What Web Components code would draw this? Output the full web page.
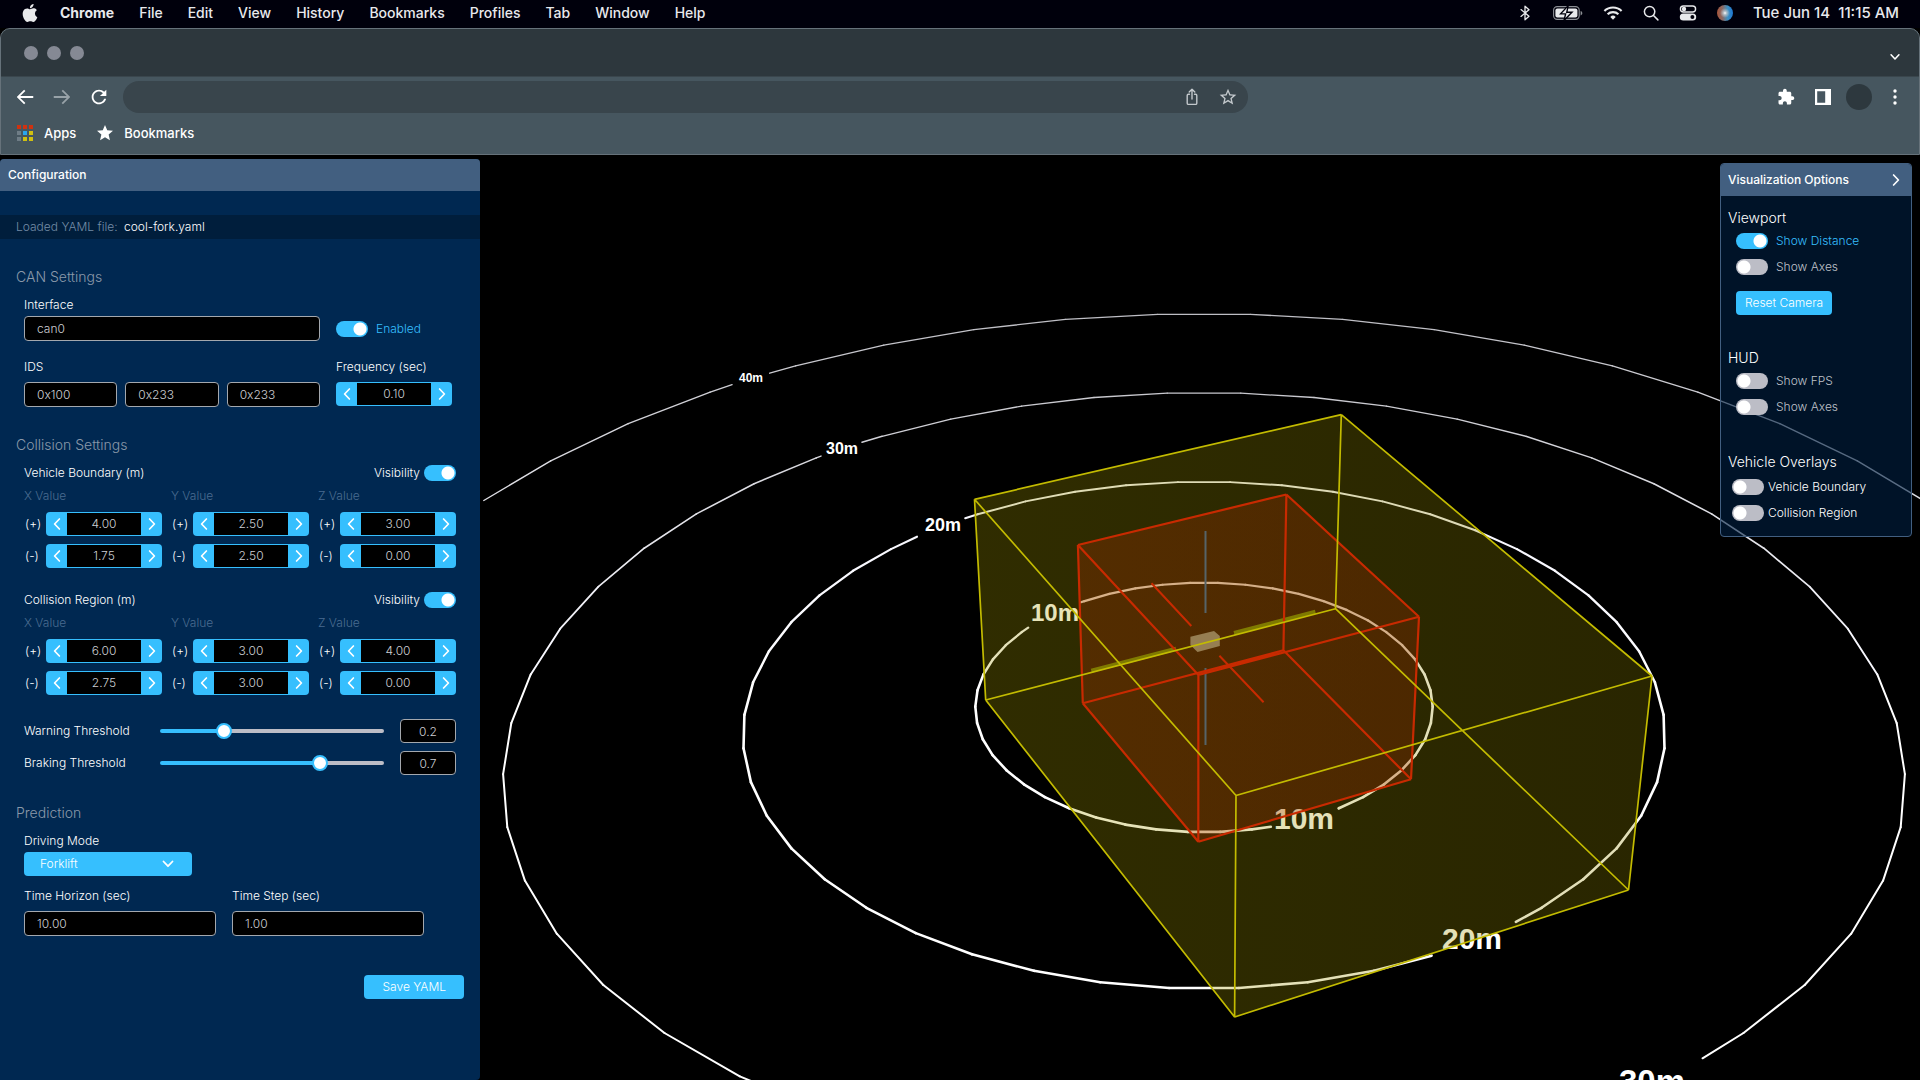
<!DOCTYPE html>
<html lang="en">
<head>
<meta charset="utf-8">
<title>Fork collision configurator</title>
<style>
html, body { height: 100%; margin: 0; background: #000; }
body { font-family: Inter, "Liberation Sans", sans-serif; font-size: 12px; line-height: 16px; color: #fff; }
</style>
</head>
<body>
<desktop-shell></desktop-shell>
<script>
const define = (name, css, html, setup) => {
  const tpl = document.createElement('template');
  tpl.innerHTML = `<style>*{box-sizing:border-box}${css}</style>${html}`;
  customElements.define(name, class extends HTMLElement {
    connectedCallback() {
      if (this.shadowRoot) return;
      const root = this.attachShadow({ mode: 'open' });
      root.append(tpl.content.cloneNode(true));
      if (setup) setup(this, root);
    }
  });
};

/* ---------- icons ---------- */
const stroke = 'fill="none" stroke="currentColor" stroke-linecap="round" stroke-linejoin="round"';
const ICONS = {
  apple: ['0 0 24 24', '<path fill="currentColor" d="M12.152 6.896c-.948 0-2.415-1.078-3.96-1.04-2.04.027-3.91 1.183-4.961 3.014-2.117 3.675-.546 9.103 1.519 12.09 1.013 1.454 2.208 3.09 3.792 3.039 1.52-.065 2.09-.987 3.935-.987 1.831 0 2.35.987 3.96.948 1.637-.026 2.676-1.48 3.676-2.948 1.156-1.688 1.636-3.325 1.662-3.415-.039-.013-3.182-1.221-3.22-4.857-.026-3.04 2.48-4.494 2.597-4.559-1.429-2.09-3.623-2.324-4.39-2.376-2-.156-3.675 1.09-4.61 1.09zM15.53 3.83c.843-1.012 1.4-2.427 1.245-3.83-1.207.052-2.662.805-3.532 1.818-.78.896-1.454 2.338-1.273 3.714 1.338.104 2.715-.688 3.559-1.701"/>'],
  bluetooth: ['0 0 16 16', `<path ${stroke} stroke-width="1.3" d="M4 4.6l8 6.6L8 14.8V1.2l4 3.6-8 6.6"/>`],
  battery: ['0 0 30 16', '<rect x=".6" y="1.6" width="25.6" height="12.8" rx="3.6" fill="none" stroke="#8d9096" stroke-width="1.1"/><rect x="2.4" y="3.4" width="22" height="9.2" rx="2" fill="currentColor"/><path d="M27.6 6v4.4c1-.3 1.7-1.2 1.7-2.2s-.7-1.9-1.7-2.2z" fill="#8d9096"/><path d="M15.2.6L7.6 8.9h5l-1.6 6.6L19 7.2h-5.2z" fill="currentColor" stroke="#00000c" stroke-width="1.4"/>'],
  wifi: ['0 0 20 16', '<g fill="none" stroke="currentColor" stroke-width="2.1"><path d="M1.4 6a12.4 12.4 0 0 1 17.2 0"/><path d="M4.6 9.3a7.8 7.8 0 0 1 10.8 0"/></g><path d="M10 14.8l-2.7-2.9a3.9 3.9 0 0 1 5.4 0z" fill="currentColor"/>'],
  search: ['0 0 16 16', `<g ${stroke} stroke-width="1.5"><circle cx="6.6" cy="6.6" r="5.2"/><path d="M10.5 10.5l4.4 4.4"/></g>`],
  control: ['0 0 18 16', '<rect x="1.4" y="1" width="15.2" height="6" rx="3" fill="none" stroke="currentColor" stroke-width="1.4"/><circle cx="5" cy="4" r="2.2" fill="currentColor"/><rect x=".8" y="8.6" width="16.4" height="7" rx="3.5" fill="currentColor"/><circle cx="13.4" cy="12.1" r="2" fill="#00000c"/>'],
  siri: ['0 0 16 16', '<defs><radialGradient id="g"><stop offset="0" stop-color="#fff"/><stop offset=".35" stop-color="#c4ccd2" stop-opacity=".8"/><stop offset="1" stop-color="#b9c4cc" stop-opacity="0"/></radialGradient><linearGradient id="h"><stop offset="0" stop-color="#a8553a"/><stop offset=".35" stop-color="#8a6a66"/><stop offset=".65" stop-color="#3f8fc0"/><stop offset="1" stop-color="#1d78d4"/></linearGradient></defs><circle cx="8" cy="8" r="8" fill="url(#h)"/><circle cx="8" cy="8" r="5" fill="url(#g)"/>'],
  down: ['0 0 16 16', `<path ${stroke} stroke-width="1.8" d="M3.5 5.5L8 10.2l4.5-4.7"/>`],
  left: ['0 0 16 16', `<path ${stroke} stroke-width="1.7" d="M10.4 3L5.6 8l4.8 5"/>`],
  right: ['0 0 16 16', `<path ${stroke} stroke-width="1.7" d="M5.6 3l4.8 5-4.8 5"/>`],
  back: ['0 0 24 24', '<path fill="currentColor" d="M21 11H6.83l5.59-5.59L11 4l-8 8 8 8 1.41-1.41L6.83 13H21z"/>'],
  forward: ['0 0 24 24', '<path fill="currentColor" d="M3 11h14.17l-5.59-5.59L13 4l8 8-8 8-1.41-1.41L17.17 13H3z"/>'],
  reload: ['0 0 24 24', '<path fill="currentColor" d="M17.65 6.35C16.2 4.9 14.21 4 12 4c-4.42 0-7.99 3.58-7.99 8s3.57 8 7.99 8c3.73 0 6.84-2.55 7.73-6h-2.08c-.82 2.33-3.04 4-5.65 4-3.31 0-6-2.69-6-6s2.69-6 6-6c1.66 0 3.14.69 4.22 1.78L13 11h7V4l-2.35 2.35z"/>'],
  share: ['0 0 16 18', `<path ${stroke} stroke-width="1.4" d="M5.5 6.2H4.4q-1.2 0-1.2 1.2v7.8q0 1.2 1.2 1.2h7.2q1.2 0 1.2-1.2V7.4q0-1.2-1.2-1.2h-1.1M8 11V1.4M5.2 4L8 1.2 10.8 4"/>`],
  starline: ['0 0 24 24', '<path fill="currentColor" d="M22 9.24l-7.19-.62L12 2 9.19 8.63 2 9.24l5.46 4.73L5.82 21 12 17.27 18.18 21l-1.63-7.03L22 9.24zM12 15.4l-3.76 2.27 1-4.28-3.32-2.88 4.38-.38L12 6.1l1.71 4.04 4.38.38-3.32 2.88 1 4.28L12 15.4z"/>'],
  star: ['2 2 20 20', '<path fill="currentColor" d="M12 17.27L18.18 21l-1.64-7.03L22 9.24l-7.19-.61L12 2 9.19 8.63 2 9.24l5.46 4.73L5.82 21z"/>'],
  puzzle: ['0 0 24 24', '<path fill="currentColor" d="M20.5 11H19V7c0-1.1-.9-2-2-2h-4V3.5C13 2.12 11.88 1 10.5 1S8 2.12 8 3.5V5H4c-1.1 0-1.99.9-1.99 2v3.8H3.5c1.49 0 2.7 1.21 2.7 2.7s-1.21 2.7-2.7 2.7H2V20c0 1.1.9 2 2 2h3.8v-1.5c0-1.49 1.21-2.7 2.7-2.7 1.49 0 2.7 1.21 2.7 2.7V22H17c1.1 0 2-.9 2-2v-4h1.5c1.38 0 2.5-1.12 2.5-2.5S21.88 11 20.5 11z"/>'],
  sidebar: ['0 0 16 16', '<path fill="currentColor" fill-rule="evenodd" d="M0 0h16v16H0zM2.2 2.2v11.6h8V2.2z"/>'],
  more: ['0 0 16 16', '<g fill="currentColor"><circle cx="8" cy="2" r="1.7"/><circle cx="8" cy="8" r="1.7"/><circle cx="8" cy="14" r="1.7"/></g>'],
  apps: ['0 0 16 16', '<g><path fill="#cf3210" d="M0 0h4v4H0zM6 0h4v4H6zM12 0h4v4h-4z"/><path fill="#6f7d86" d="M0 6h4v4H0zM0 12h4v4H0z"/><path fill="#2aa5ee" d="M6 6h4v4H6z"/><path fill="#d0c010" d="M12 6h4v4h-4zM6 12h4v4H6zM12 12h4v4h-4z"/></g>']
};
define('ui-icon', `:host{display:inline-flex;flex:none;width:16px;height:16px}svg{width:100%;height:100%;display:block}`, ``, (el, root) => {
  const [box, body] = ICONS[el.getAttribute('name')];
  root.innerHTML += `<svg viewBox="${box}" aria-hidden="true">${body}</svg>`;
});

/* ---------- controls ---------- */
define('text-field', `
:host{display:flex;flex-direction:column;gap:7px;min-width:0;flex:1}
:host([tight]){gap:3px}
:host([boxed]){flex:none;width:56px}
label:empty{display:none}
input{width:100%;height:25px;padding:0 12px;background:#000;border:1px solid #a4a8ae;border-radius:4px;color:#ccced3;font:inherit}
:host([boxed]) input{height:24px;padding:0;text-align:center}`,
`<label for="i"></label><input id="i" type="text">`, (el, root) => {
  const input = root.querySelector('input');
  root.querySelector('label').textContent = el.getAttribute('label') || '';
  if (el.hasAttribute('name')) input.setAttribute('aria-label', el.getAttribute('name'));
  input.value = el.getAttribute('value');
});

define('num-stepper', `
:host{display:flex;flex-direction:column;gap:7px}
label:empty{display:none}
div{display:flex;width:116px;height:24px;background:#36bffe;border-radius:4px;padding:1px 0}
button{flex:none;width:21px;padding:0;border:0;background:none;color:#fff;display:flex;align-items:center;justify-content:center}
ui-icon{width:16px;height:16px}
input{flex:1;min-width:0;padding:0;border:0;background:#000;color:#ccced3;font:inherit;text-align:center}`,
`<label for="i"></label><div><button type="button" aria-label="Decrease"><ui-icon name="left"></ui-icon></button><input id="i" type="text"><button type="button" aria-label="Increase"><ui-icon name="right"></ui-icon></button></div>`,
(el, root) => {
  const input = root.querySelector('input');
  root.querySelector('label').textContent = el.getAttribute('label') || '';
  if (el.hasAttribute('name')) input.setAttribute('aria-label', el.getAttribute('name'));
  input.value = el.getAttribute('value');
  const [dec, inc] = root.querySelectorAll('button');
  const bump = d => { input.value = (parseFloat(input.value) + d).toFixed(2); };
  dec.onclick = () => bump(-0.05);
  inc.onclick = () => bump(0.05);
});

define('toggle-switch', `
:host{display:flex;color:#bfc2c8}
:host([on]){color:#36bffe}
:host([plain]){color:#fff}
label{display:flex;align-items:center;gap:8px}
:host([plain]) label{gap:4px}
:host([reverse]) label{flex-direction:row-reverse}
input{appearance:none;margin:0;flex:none;width:32px;height:16px;border-radius:8px;background:radial-gradient(circle at 8px 8px,#fff 6px,#bcbdc6 7px)}
input:checked{background:radial-gradient(circle at 24px 8px,#fff 6px,#36bffe 7px)}`,
`<label><input type="checkbox" role="switch"><span><slot></slot></span></label>`,
(el, root) => { root.querySelector('input').checked = el.hasAttribute('on'); });

define('range-field', `
:host{display:grid;grid-template-columns:136px minmax(0,1fr) 56px;align-items:center;height:24px}
input{appearance:none;width:auto;margin:0 16px 0 0;height:16px;background:none}
input::-webkit-slider-runnable-track{height:4px;border-radius:2px;background:linear-gradient(to right,#36bffe var(--fill),#bcbdc6 var(--fill))}
input::-webkit-slider-thumb{appearance:none;width:16px;height:16px;margin-top:-6px;border-radius:50%;background:#fff;border:2px solid #36bffe}`,
`<label for="r"></label><input id="r" type="range" min="0" max="1" step="0.01"><text-field boxed></text-field>`,
(el, root) => {
  const range = root.querySelector('input'), label = el.getAttribute('label');
  root.querySelector('label').textContent = label;
  range.value = el.getAttribute('at');
  const paint = () => range.style.setProperty('--fill', range.value * 100 + '%');
  range.oninput = paint; paint();
  const field = root.querySelector('text-field');
  field.replaceWith(Object.assign(document.createElement('div'), {
    innerHTML: `<text-field boxed name="${label} value" value="${el.getAttribute('value')}"></text-field>` }).firstChild);
});

define('drop-down', `
:host{display:flex;flex-direction:column;gap:3px;width:168px}
div{display:grid;align-items:center}
select,ui-icon{grid-area:1/1}
select{appearance:none;height:24px;padding:0 16px;border:0;border-radius:4px;background:#36bffe;color:#fff;font:inherit}
ui-icon{justify-self:end;margin-right:16px;pointer-events:none}`,
`<label for="s"></label><div><select id="s"></select><ui-icon name="down"></ui-icon></div>`,
(el, root) => {
  root.querySelector('label').textContent = el.getAttribute('label');
  root.querySelector('select').add(new Option(el.getAttribute('value')));
});

define('action-button', `
:host{display:flex}
button{width:100%;height:24px;padding:0 9px;border:0;border-radius:4px;background:#36bffe;color:#fff;font:inherit;white-space:nowrap}
:host([wide]) button{padding:0 18px}`,
`<button type="button"><slot></slot></button>`);

/* ---------- configuration panel ---------- */
define('form-section', `
:host{display:block;margin-top:29px;padding:0 24px}
h2{margin:0 0 11px -8px;font-size:14px;line-height:18px;font-weight:300;color:#8a99aa}`,
`<h2></h2><slot></slot>`,
(el, root) => { root.querySelector('h2').textContent = el.getAttribute('heading'); });

define('axis-group', `
:host{display:block}
header{display:flex;justify-content:space-between;margin-bottom:7px}
.axes{display:flex;justify-content:space-between}
.axis{display:grid;grid-template-columns:22px auto;gap:8px 0;align-items:center}
.name{grid-column:1/-1;color:#4a6c90}
.sign{padding-left:1px;color:#fff}`,
`<header><span></span><toggle-switch reverse plain on>Visibility</toggle-switch></header><div class="axes"></div>`,
(el, root) => {
  const title = el.getAttribute('heading');
  root.querySelector('header span').textContent = title;
  const plus = el.getAttribute('plus').split(' '), minus = el.getAttribute('minus').split(' ');
  root.querySelector('.axes').innerHTML = ['X', 'Y', 'Z'].map((a, i) => `
    <div class="axis"><span class="name">${a} Value</span>
      <span class="sign">(+)</span><num-stepper name="${title} ${a} plus" value="${plus[i]}"></num-stepper>
      <span class="sign">(-)</span><num-stepper name="${title} ${a} minus" value="${minus[i]}"></num-stepper></div>`).join('');
});

define('config-panel', `
:host{display:block;background:#002851;border-radius:4px 4px 4px 0;overflow:hidden;font-weight:300}
h1{margin:0;padding:8px;font-size:12px;line-height:16px;font-weight:500;background:#425f80}
.file{margin-top:24px;padding:4px 16px;background:#001e3c;color:#748ca6}
.file b{font-weight:300;color:#fff;margin-left:3px}
.row{display:flex;gap:16px}
.row + .row{margin-top:18px}
.can{padding-right:4px}
.wide{flex:1;min-width:0;display:flex;flex-direction:column;gap:7px}
.side{flex:none;width:116px;align-self:flex-end}
.ids{display:flex;gap:8px}
.row toggle-switch{padding-bottom:4px}
axis-group + axis-group,.ranges{margin-top:24px}
.ranges{display:grid;gap:8px}
.times{margin:12px 32px 0 0}
.save{display:flex;justify-content:flex-end;margin:39px 16px 0}`,
`<h1>Configuration</h1>
<div class="file">Loaded YAML file: <b>cool-fork.yaml</b></div>
<form-section heading="CAN Settings">
  <div class="row can"><text-field tight label="Interface" value="can0"></text-field><toggle-switch class="side" on>Enabled</toggle-switch></div>
  <div class="row can"><div class="wide"><span>IDS</span><div class="ids"><text-field name="ID 1" value="0x100"></text-field><text-field name="ID 2" value="0x233"></text-field><text-field name="ID 3" value="0x233"></text-field></div></div>
    <num-stepper label="Frequency (sec)" value="0.10"></num-stepper></div>
</form-section>
<form-section heading="Collision Settings">
  <axis-group heading="Vehicle Boundary (m)" plus="4.00 2.50 3.00" minus="1.75 2.50 0.00"></axis-group>
  <axis-group heading="Collision Region (m)" plus="6.00 3.00 4.00" minus="2.75 3.00 0.00"></axis-group>
  <div class="ranges"><range-field label="Warning Threshold" at="0.27" value="0.2"></range-field><range-field label="Braking Threshold" at="0.73" value="0.7"></range-field></div>
</form-section>
<form-section heading="Prediction">
  <drop-down label="Driving Mode" value="Forklift"></drop-down>
  <div class="row times"><text-field label="Time Horizon (sec)" value="10.00"></text-field><text-field label="Time Step (sec)" value="1.00"></text-field></div>
</form-section>
<div class="save"><action-button wide>Save YAML</action-button></div>`);

/* ---------- visualization options ---------- */
define('option-group', `
:host{display:flex;flex-direction:column;align-items:flex-start;gap:10px;padding:0 15px}
:host([overlays]){padding:0 11px;margin-top:4px}
h3{margin:0 0 -4px -8px;font-size:14px;line-height:18px;font-weight:300;color:#fff}
:host([overlays]) h3{margin:0 0 -2px -4px}
::slotted(action-button){margin-top:6px}`,
`<h3></h3><slot></slot>`,
(el, root) => { root.querySelector('h3').textContent = el.getAttribute('heading'); });

define('options-panel', `
:host{display:block;width:192px;border:1px solid #425f80;border-radius:4px;background:rgba(0,32,66,.6);overflow:hidden;font-weight:300}
header{display:flex;align-items:center;justify-content:space-between;height:32px;padding:0 7px;background:#425f80}
h2{margin:0;font-size:12px;line-height:16px;font-weight:500}
button{padding:0;border:0;background:none;color:#fff;display:flex}
.body{display:flex;flex-direction:column;gap:34px;padding:13px 0 15px}`,
`<header><h2>Visualization Options</h2><button type="button" aria-label="Collapse"><ui-icon name="right"></ui-icon></button></header>
<div class="body">
<option-group heading="Viewport"><toggle-switch on>Show Distance</toggle-switch><toggle-switch>Show Axes</toggle-switch><action-button>Reset Camera</action-button></option-group>
<option-group heading="HUD"><toggle-switch>Show FPS</toggle-switch><toggle-switch>Show Axes</toggle-switch></option-group>
<option-group heading="Vehicle Overlays" overlays><toggle-switch plain>Vehicle Boundary</toggle-switch><toggle-switch plain>Collision Region</toggle-switch></option-group>
</div>`);

/* ---------- 3D scene ---------- */
/* Ground-plane point (metres right, metres forward) to view coordinates. */
const project = (x, z) => { const w = 1 + 0.007255 * z; return [1204 + 22.81 * x / w, -1012 + 1710.4 / w]; };
const rad = Math.PI / 180;
const onRing = (r, a) => project(r * Math.cos(a * rad), r * Math.sin(a * rad));
/* A ring is a 48-sided polygon; each arc runs between two angles in degrees. */
const arc = (r, from, to, thin, thick, dim) => {
  const stops = [from];
  for (let a = Math.ceil((from - 3.75) / 7.5) * 7.5 + 3.75; a < to; a += 7.5) if (a > from) stops.push(a);
  stops.push(to);
  let out = '';
  for (let i = 1; i < stops.length; i++) {
    const [x1, y1] = onRing(r, stops[i - 1]), [x2, y2] = onRing(r, stops[i]);
    const far = Math.max(0, Math.sin((stops[i - 1] + stops[i]) / 2 * rad));
    const w = thick + (thin - thick) * far, l = Math.round(255 - dim * far);
    out += `<line x1="${x1.toFixed(1)}" y1="${y1.toFixed(1)}" x2="${x2.toFixed(1)}" y2="${y2.toFixed(1)}" stroke="rgb(${l},${l},${Math.min(255, l + 6)})" stroke-width="${w.toFixed(2)}"/>`;
  }
  return out;
};
const boxEdges = (t, b) => t.map((p, i) => {
  const q = t[(i + 1) % 4], c = b[i], d = b[(i + 1) % 4];
  return `M${p}L${q}M${c}L${d}M${p}L${c}`;
}).join('');
/* Corners in order left, back, right, front. */
const Y = [['974.5,499.3', '1341.3,414.7', '1652,676', '1236,795.5'], ['985.7,700', '1335.5,608.7', '1628.5,890', '1234.6,1017']];
const R = [['1077.9,545', '1286.4,494.5', '1419,616.7', '1198.4,675'], ['1082.8,703.3', '1283.4,650.3', '1411,779.3', '1198.3,841.7']];
const hull = ([t, b]) => [t[0], t[1], t[2], b[2], b[3], b[0]].join(' ');

define('scene-view', `
:host{display:block;min-width:0;min-height:0;overflow:hidden;background:#000}
svg{display:block;width:100%;height:100%}
text{fill:#fff;font-family:"Liberation Sans",sans-serif;font-weight:700;text-anchor:middle}
.ring{stroke-linecap:round}`,
``, (el, root) => {
  root.innerHTML += `<svg viewBox="480 155 1440 925" preserveAspectRatio="xMidYMid slice" role="img" aria-label="Distance rings and collision volumes">
<defs>
<linearGradient id="y" gradientUnits="userSpaceOnUse" x1="974" y1="0" x2="1652" y2="0"><stop offset="0" stop-color="#aca000"/><stop offset="1" stop-color="#948800"/></linearGradient>
<linearGradient id="r" gradientUnits="userSpaceOnUse" x1="1078" y1="0" x2="1419" y2="0"><stop offset="0" stop-color="#c03000"/><stop offset="1" stop-color="#ae2800"/></linearGradient>
</defs>
<g class="ring">
${arc(40, 0, 126, 1.3, 1.6, 65)}${arc(40, 129.3, 153.2, 1.3, 1.6, 65)}
${arc(30, -53, 126, 1.3, 2, 55)}${arc(30, 130.7, 293, 1.3, 2, 55)}
${arc(20, -52.8, 125.8, 1.9, 2.6, 10)}${arc(20, 134, 295.7, 1.9, 2.6, 10)}
${arc(10, -56.3, 124.9, 2.1, 2.6, 10)}${arc(10, 143.5, 285.8, 2.1, 2.6, 10)}
</g>
<text x="751" y="382" font-size="12">40m</text>
<text x="842" y="454" font-size="16">30m</text>
<text x="943" y="531" font-size="18">20m</text>
<text x="1055" y="621" font-size="24">10m</text>
<text x="1304" y="829" font-size="30">10m</text>
<text x="1472" y="949" font-size="30">20m</text>
<text x="1652" y="1093" font-size="33">30m</text>
<polygon points="${hull(Y)}" fill="url(#y)" fill-opacity=".28"/>
<polygon points="${hull(R)}" fill="url(#r)" fill-opacity=".25"/>
<polygon points="1190.4,636.7 1214,631 1219.8,636 1219.8,646 1197.5,652 1190.4,645" fill="#967e52"/>
<g fill="none">
<path stroke="#566468" stroke-width="2" d="M1205.5 531V613M1205.5 668V745"/>
<path stroke="#7f7a00" stroke-width="4" d="M1091.3 670.7L1176 648.7M1234 633L1315.4 611.7"/>
<path stroke="#c82a00" stroke-width="2" d="M1151.5 583.3L1191.3 626M1219.4 655.7L1263.6 702.3"/>
<path stroke="#c82a00" stroke-width="2.2" stroke-linejoin="round" d="${boxEdges(...R)}"/>
<path stroke="#c3bb00" stroke-width="1.7" stroke-linejoin="round" d="${boxEdges(...Y)}"/>
</g></svg>`;
});

/* ---------- desktop and browser chrome ---------- */
define('menu-bar', `
:host{display:flex;align-items:center;height:28px;padding:0 21px 2px;background:#00000c;color:#e8e9ec;font-size:14px;line-height:18px;font-weight:500}
nav{display:flex;align-items:center;gap:25px}
nav ui-icon{width:18px;height:18px;margin-right:-4px}
b{font-weight:700}
.status{display:flex;align-items:center;margin-left:auto;gap:20px}
.status ui-icon[name=battery]{width:30px}
.status ui-icon[name=wifi]{width:20px}
.status ui-icon[name=control]{width:18px}
time{white-space:pre;font-size:15px}`,
`<nav><ui-icon name="apple"></ui-icon><b>Chrome</b><span>File</span><span>Edit</span><span>View</span><span>History</span><span>Bookmarks</span><span>Profiles</span><span>Tab</span><span>Window</span><span>Help</span></nav>
<div class="status"><ui-icon name="bluetooth"></ui-icon><ui-icon name="battery"></ui-icon><ui-icon name="wifi"></ui-icon><ui-icon name="search"></ui-icon><ui-icon name="control"></ui-icon><ui-icon name="siri"></ui-icon><time>Tue Jun 14  11:15 AM</time></div>`);

define('browser-chrome', `
:host{display:block;border:1px solid #66727a;border-radius:10px 10px 0 0;background:#46565f;overflow:hidden}
.tabs{display:flex;align-items:center;gap:9px;height:48px;padding:0 17px 0 23px;background:#2d373d;border-bottom:1px solid #3a464d}
.tabs i{width:14px;height:14px;border-radius:50%;background:#858994}
.tabs button{margin-left:auto;align-self:flex-end;padding-bottom:12px}
.tabs ui-icon{width:14px;height:14px}
button{padding:0;border:0;background:none;color:#fff;display:flex}
.bar{display:flex;align-items:center;height:40px;padding:0 16px 0 13px}
.nav{display:flex;gap:15px}
.nav ui-icon{width:22px;height:22px}
.nav .off{color:#98a2a8}
.url{display:flex;align-items:center;gap:18px;width:calc(60% - 8px);height:32px;margin-left:13px;padding:0 10px 0 16px;border-radius:16px;background:#39454c;color:#c3c8cc}
.url input{flex:1;min-width:0;border:0;background:none;color:#fff;font:inherit}
.url button{color:inherit}
.url ui-icon[name=share]{height:18px}
.url ui-icon[name=starline]{width:20px;height:20px}
.tools{display:flex;align-items:center;gap:20px;margin-left:auto}
.tools ui-icon[name=puzzle]{width:18px;height:18px}
.tools i{width:26px;height:26px;margin:0 -5px;border-radius:50%;background:#2d383e}
.marks{display:flex;align-items:center;gap:21px;height:37px;padding:0 16px 5px;font-size:13px;font-weight:500}
.marks a{display:flex;align-items:center;gap:11px;color:#fff;text-decoration:none}`,
`<div class="tabs"><i></i><i></i><i></i><button aria-label="Search tabs"><ui-icon name="down"></ui-icon></button></div>
<div class="bar"><div class="nav"><button aria-label="Back"><ui-icon name="back"></ui-icon></button><button class="off" aria-label="Forward"><ui-icon name="forward"></ui-icon></button><button aria-label="Reload"><ui-icon name="reload"></ui-icon></button></div>
<div class="url"><input type="text" aria-label="Address"><button aria-label="Share"><ui-icon name="share"></ui-icon></button><button aria-label="Bookmark this page"><ui-icon name="starline"></ui-icon></button></div>
<div class="tools"><button aria-label="Extensions"><ui-icon name="puzzle"></ui-icon></button><button aria-label="Side panel"><ui-icon name="sidebar"></ui-icon></button><i></i><button aria-label="Menu"><ui-icon name="more"></ui-icon></button></div></div>
<div class="marks"><a href="#apps"><ui-icon name="apps"></ui-icon>Apps</a><a href="#bookmarks"><ui-icon name="star"></ui-icon>Bookmarks</a></div>`);

define('desktop-shell', `
:host{display:flex;flex-direction:column;height:100vh;overflow:hidden}
menu-bar,browser-chrome{flex:none}
main{flex:1;min-height:0;display:grid;grid-template-columns:minmax(480px,25%) minmax(0,1fr);grid-template-rows:minmax(0,1fr)}
config-panel{margin-top:4px}
scene-view,options-panel{grid-area:1/2}
options-panel{place-self:start end;margin:8px 8px 0 0}`,
`<menu-bar></menu-bar><browser-chrome></browser-chrome><main><config-panel></config-panel><scene-view></scene-view><options-panel></options-panel></main>`);
</script>
</body>
</html>
